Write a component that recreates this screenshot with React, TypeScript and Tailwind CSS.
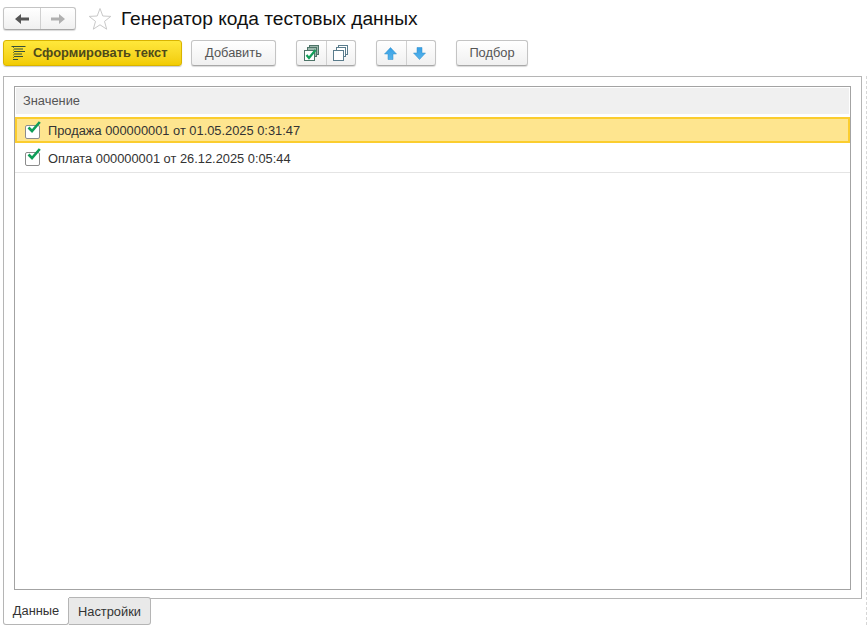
const font = 'font-["Liberation_Sans",Arial,sans-serif]';

function Btn({ className = "", children }: { className?: string; children: React.ReactNode }) {
  return (
    <div className={"flex h-[26px] items-center justify-center rounded-[3px] border border-[#c4c4c4] border-b-[#a8a8a8] bg-gradient-to-b from-white to-[#f0f0f0] shadow-[0_1px_1px_rgba(0,0,0,0.15)] " + className}>
      {children}
    </div>
  );
}

function Arrow({ dir, color }: { dir: "l" | "r"; color: string }) {
  return (
    <svg width="16" height="12" viewBox="0 0 16 12" className={dir === "r" ? "-scale-x-100" : ""}>
      <path d="M1 6 L7 1 V4.5 H15 V7.5 H7 V11 Z" fill={color} />
    </svg>
  );
}

function Star() {
  return (
    <svg width="24" height="24" viewBox="0 0 24 24">
      <path d="M12 1.5 L14.8 9 L22.8 9.4 L16.5 14.4 L18.7 22.2 L12 17.8 L5.3 22.2 L7.5 14.4 L1.2 9.4 L9.2 9 Z" fill="white" stroke="#c9c9c9" strokeWidth="1" />
    </svg>
  );
}

function LinesIcon() {
  return (
    <svg width="15" height="15" viewBox="0 0 15 15">
      <path d="M0.5 0.5H14.5M3 3H12M3 5.5H14M3 8H11M3 10.5H12" stroke="#35503a" strokeWidth="1" fill="none" />
      <path d="M2 13.5H7" stroke="#35503a" strokeWidth="1" fill="none" />
      <path d="M2.5 1V13" stroke="#7a7a20" strokeWidth="1" strokeDasharray="1 1.5" />
    </svg>
  );
}

function Stack({ checked }: { checked?: boolean }) {
  const s = checked ? "#4d7468" : "#5a7c8c";
  const back = checked ? "#9db8ad" : "#ffffff";
  return (
    <svg width="16" height="16" viewBox="0 0 16 16">
      <rect x="5.5" y="0.5" width="9" height="9" fill={back} stroke={s} />
      <rect x="3.5" y="2.5" width="9" height="9" fill={back} stroke={s} />
      <rect x="0.5" y="5.5" width="10" height="10" fill="#fff" stroke={s} />
      {checked && <path d="M2.5 10 L5 13 L11.5 5" fill="none" stroke="#12a05a" strokeWidth="2.2" />}
    </svg>
  );
}

function UpDown({ down }: { down?: boolean }) {
  return (
    <svg width="13" height="13" viewBox="0 0 13 13" className={down ? "rotate-180" : ""}>
      <defs>
        <linearGradient id={down ? "gd" : "gu"} x1="0" y1={down ? "1" : "0"} x2="0" y2={down ? "0" : "1"}>
          <stop offset="0" stopColor="#35a0e6" />
          <stop offset="1" stopColor="#57b3ea" />
        </linearGradient>
      </defs>
      <path d="M6.5 0.5 L12.5 7 H9 V12.5 H4 V7 H0.5 Z" fill={`url(#${down ? "gd" : "gu"})`} stroke="#2f8ccb" strokeWidth="0.5" />
    </svg>
  );
}

function Check({ className = "" }: { className?: string }) {
  return (
    <div className={"relative h-[14px] w-[15px] shrink-0 rounded-[2px] border border-[#8c8c8c] bg-white " + className}>
      <svg width="15" height="14" viewBox="0 0 15 14" className="absolute left-[1px] top-[-6px]">
        <path d="M1.5 7.5 L5 11 L12.8 2" fill="none" stroke="#0f9d58" strokeWidth="2.6" />
      </svg>
    </div>
  );
}

export default function App() {
  return (
    <div className={font + " flex h-[629px] w-[867px] bg-white text-[12.85px] text-[#333]"}>
      <div className="flex w-[866px] flex-col">
        <div className="ml-[3px] mt-[7px] flex h-[23px] items-center">
          <div className="flex h-[23px] w-[73px] rounded-[3px] border border-[#c4c4c4] border-b-[#a8a8a8] bg-gradient-to-b from-white to-[#f0f0f0] shadow-[0_1px_1px_rgba(0,0,0,0.15)]">
            <div className="flex w-[37px] items-center justify-center border-r border-[#d0d0d0]"><Arrow dir="l" color="#555" /></div>
            <div className="flex flex-1 items-center justify-center"><Arrow dir="r" color="#b0b0b0" /></div>
          </div>
          <div className="ml-[12px] flex"><Star /></div>
          <div className="ml-[9px] text-[19.2px] leading-[23px] text-[#111]">Генератор кода тестовых данных</div>
        </div>

        <div className="ml-[3px] mt-[10px] flex h-[26px] items-center">
          <div className="flex h-[26px] w-[179px] items-center rounded-[3px] border border-[#d9b400] bg-gradient-to-b from-[#ffe83a] to-[#f2cc00] pl-[7px] font-bold text-[#4f4a1a] shadow-[0_1px_1px_rgba(0,0,0,0.2)]">
            <LinesIcon />
            <span className="ml-[7px]">Сформировать текст</span>
          </div>
          <Btn className="ml-[9px] w-[85px] text-[#555]">Добавить</Btn>
          <Btn className="ml-[20px] w-[60px]">
            <div className="flex h-full w-[30px] items-center justify-center border-r border-[#d0d0d0]"><Stack checked /></div>
            <div className="flex h-full flex-1 items-center justify-center"><Stack /></div>
          </Btn>
          <Btn className="ml-[20px] w-[60px]">
            <div className="flex h-full w-[30px] items-center justify-center border-r border-[#d0d0d0] pr-[3px]"><UpDown /></div>
            <div className="flex h-full flex-1 items-center justify-center pr-[3px]"><UpDown down /></div>
          </Btn>
          <Btn className="ml-[20px] w-[72px] text-[#555]">Подбор</Btn>
        </div>

        <div className="ml-[3px] mt-[10px] flex h-[523px] w-[859px] border border-[#b5b5b5] pb-[8px] pl-[10px] pr-[10px] pt-[9px]">
          <div className="flex flex-1 flex-col border border-[#a3a3a3]">
            <div className="flex h-[28px] items-center border border-white bg-[#f0f0f0] pl-[7px] text-[#555]">Значение</div>
            <div className="mt-[2px] flex h-[26px] items-center gap-[8px] border-2 border-[#fbcd2e] bg-[#fee58f] pl-[8px]">
              <Check className="mt-[4px]" />
              <span className="mt-[2px]">Продажа 000000001 от 01.05.2025 0:31:47</span>
            </div>
            <div className="flex h-[30px] items-center gap-[8px] border-b border-[#e4e4e4] pl-[10px]">
              <Check className="mt-[3px]" />
              <span className="mt-[3px]">Оплата 000000001 от 26.12.2025 0:05:44</span>
            </div>
          </div>
        </div>

        <div className="ml-[3px] flex">
          <div className="-mt-px flex h-[27px] w-[66px] items-center justify-center rounded-b-[3px] border border-t-0 border-[#b5b5b5] bg-white text-[#333]">Данные</div>
          <div className="-mt-[2px] flex h-[28px] w-[82px] items-center justify-center rounded-r-[3px] border border-l-0 border-[#b5b5b5] bg-[#e9e9e9] pt-[1px] text-[#333]">Настройки</div>
        </div>
      </div>
      <div className="mt-[76px] h-[549px] w-px border-r border-dashed border-[#d6d6d6]" />
    </div>
  );
}
